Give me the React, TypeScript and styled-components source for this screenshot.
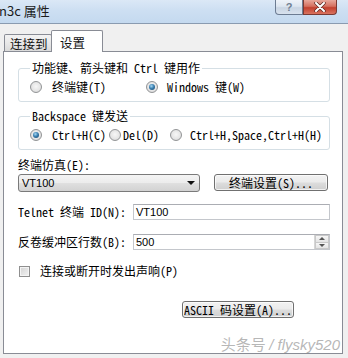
import React from "react";
import styled, { createGlobalStyle } from "styled-components";

const SONG = `"Noto Sans Mono CJK SC", "Noto Sans CJK SC", monospace`;
const UI = `"Noto Sans CJK SC", "Noto Sans", sans-serif`;
const SANS = `"Liberation Sans", Arial, sans-serif`;

const Global = createGlobalStyle`
  html, body { margin: 0; padding: 0; }
  body { width: 348px; height: 358px; overflow: hidden; background: #f0f0f0; }
  * { box-sizing: border-box; }
`;

const Window = styled.div`
  position: relative;
  width: 348px;
  height: 358px;
  display: flex;
  flex-direction: column;
  background: #f0f0f0;
  font-family: ${SONG};
  font-size: 12px;
  color: #000;
`;

const TitleBar = styled.div`
  flex: none;
  height: 24px;
  display: flex;
  align-items: flex-start;
  justify-content: space-between;
  padding-right: 11px;
  background: linear-gradient(180deg, #dbe8f6 0%, #cddff2 45%, #c4d9ef 100%);
  border-bottom: 1px solid #8a9bb0;
`;

const Title = styled.div`
  font-family: ${UI};
  font-size: 13px;
  line-height: 22px;
  margin-left: -1px;
  color: #1b1b1b;
`;

const Caption = styled.div`
  display: flex;
`;

const CapButton = styled.div<{ $close?: boolean }>`
  width: ${(p) => (p.$close ? 34 : 28)}px;
  height: 15px;
  display: flex;
  align-items: center;
  justify-content: center;
  border: 1px solid ${(p) => (p.$close ? "#7a3a33" : "#6c7c92")};
  border-top: none;
  border-radius: ${(p) => (p.$close ? "0 0 4px 0" : "0 0 0 4px")};
  background: ${(p) =>
    p.$close
      ? "linear-gradient(180deg, #e8a89b 0%, #d5705f 45%, #c2402e 55%, #d9735f 100%)"
      : "linear-gradient(180deg, #eef3f9 0%, #dde6f0 45%, #c9d5e3 55%, #d8e2ee 100%)"};
  font-family: ${SANS};
  font-weight: bold;
  font-size: 11px;
  color: #6f7f92;
`;

const Body = styled.div`
  flex: 1;
  display: flex;
  flex-direction: column;
  padding: 6px 5px 4px 3px;
`;

const TabRow = styled.div`
  position: relative;
  z-index: 1;
  height: 22px;
  margin-bottom: -1px;
  padding-left: 1px;
  display: flex;
  align-items: flex-end;
`;

const Tab = styled.div<{ $active?: boolean; $w: number }>`
  width: ${(p) => p.$w}px;
  height: ${(p) => (p.$active ? 22 : 17)}px;
  margin-bottom: ${(p) => (p.$active ? 0 : 1)}px;
  margin-left: ${(p) => (p.$active ? -1 : 0)}px;
  padding-left: ${(p) => (p.$active ? 8 : 5)}px;
  padding-top: ${(p) => (p.$active ? 4 : 1)}px;
  border: 1px solid #898c95;
  border-bottom: none;
  border-radius: 2px 2px 0 0;
  background: ${(p) =>
    p.$active ? "#ffffff" : "linear-gradient(180deg, #f3f3f3 0%, #e8e8e8 50%, #dadada 100%)"};
  font-family: ${UI};
  font-size: 12.5px;
  line-height: 15px;
  color: #111;
`;

const Panel = styled.div`
  flex: 1;
  display: flex;
  flex-direction: column;
  padding: 9px 12px 0 14px;
  background: #fff;
  border: 1px solid #898c95;
`;

const Group = styled.fieldset<{ $mt?: number }>`
  margin: ${(p) => p.$mt ?? 0}px 0 0 0;
  padding: 4px 0 6px 11px;
  border: 1px solid #d5dfe5;
  border-radius: 3px;
  min-width: 0;
`;

const Legend = styled.legend`
  padding: 0 2px;
  line-height: 14px;
  font-size: 12px;
`;

const RadioRow = styled.div`
  height: 16px;
  display: flex;
  align-items: center;
`;

const Option = styled.label<{ $w?: number; $gap: number }>`
  display: flex;
  align-items: center;
  gap: ${(p) => p.$gap}px;
  width: ${(p) => (p.$w ? `${p.$w}px` : "auto")};
  flex: none;
  white-space: nowrap;
  line-height: 14px;
`;

const Dot = styled.span<{ $on?: boolean }>`
  width: 12px;
  height: 12px;
  flex: none;
  border-radius: 50%;
  border: 1px solid #929496;
  background: radial-gradient(circle at 50% 45%, #f7f7f7 0%, #e6e6e6 55%, #cfcfcf 100%);
  display: flex;
  align-items: center;
  justify-content: center;
  &::after {
    content: "";
    display: ${(p) => (p.$on ? "block" : "none")};
    width: 6px;
    height: 6px;
    border-radius: 50%;
    background: radial-gradient(circle at 40% 35%, #a6d8f3 0%, #3a7fb0 45%, #163f62 100%);
  }
`;

const FieldLabel = styled.div<{ $mt: number }>`
  margin-top: ${(p) => p.$mt}px;
  line-height: 14px;
  height: 14px;
`;

const Row = styled.div<{ $mt: number; $h: number }>`
  margin-top: ${(p) => p.$mt}px;
  height: ${(p) => p.$h}px;
  display: flex;
  align-items: center;
`;

const Combo = styled.div`
  width: 182px;
  height: 18px;
  display: flex;
  align-items: center;
  justify-content: space-between;
  padding: 0 4px 0 3px;
  border: 1px solid #7a7a7a;
  border-radius: 3px;
  background: linear-gradient(180deg, #f4f4f4 0%, #ececec 48%, #dfdfdf 52%, #d2d2d2 100%);
  font-family: ${SANS};
  font-size: 11px;
`;

const Arrow = styled.span`
  width: 0;
  height: 0;
  border-left: 4px solid transparent;
  border-right: 4px solid transparent;
  border-top: 4px solid #111;
  margin-top: 1px;
`;

const Button = styled.div<{ $w: number; $ml: number }>`
  width: ${(p) => p.$w}px;
  height: 17px;
  margin-left: ${(p) => p.$ml}px;
  display: flex;
  align-items: center;
  justify-content: center;
  border: 1px solid #707070;
  border-radius: 3px;
  background: linear-gradient(180deg, #f2f2f2 0%, #ebebeb 48%, #dddddd 52%, #cfcfcf 100%);
  box-shadow: inset 0 0 0 1px rgba(255, 255, 255, 0.7);
  white-space: nowrap;
  line-height: 14px;
`;

const InlineLabel = styled.div`
  width: 115px;
  flex: none;
  line-height: 14px;
  white-space: nowrap;
`;

const Input = styled.div`
  flex: 1;
  height: 16px;
  display: flex;
  align-items: center;
  justify-content: space-between;
  padding: 0 0 0 2px;
  border: 1px solid #c4c7cc;
  border-top-color: #abadb3;
  background: #fff;
  font-family: ${SANS};
  font-size: 11px;
`;

const Spinner = styled.div`
  width: 15px;
  height: 14px;
  display: flex;
  flex-direction: column;
  border-left: 1px solid #d6d6d6;
`;

const SpinHalf = styled.div<{ $up?: boolean }>`
  flex: 1;
  display: flex;
  align-items: center;
  justify-content: center;
  background: linear-gradient(180deg, #f6f6f6, #e4e4e4);
  border: 1px solid #c9c9c9;
  border-top-width: ${(p) => (p.$up ? 1 : 0)}px;
  &::after {
    content: "";
    width: 0;
    height: 0;
    border-left: 3px solid transparent;
    border-right: 3px solid transparent;
    ${(p) => (p.$up ? "border-bottom: 3px solid #555;" : "border-top: 3px solid #555;")}
  }
`;

const Check = styled.span`
  width: 11px;
  height: 11px;
  flex: none;
  margin-left: 1px;
  border: 1px solid #8f8f8f;
  background: linear-gradient(135deg, #d2d2d2 0%, #e6e6e6 60%, #f2f2f2 100%);
  box-shadow: inset 0 0 0 1px #f4f4f4;
`;

const CheckLabel = styled.span`
  margin-left: 10px;
  line-height: 14px;
`;

const Watermark = styled.div`
  position: absolute;
  right: 8px;
  bottom: 5px;
  font-family: ${UI};
  font-size: 15px;
  line-height: 17px;
  color: rgba(170, 170, 170, 0.85);
  white-space: nowrap;
`;

const Slant = styled.span`
  font-style: italic;
  font-family: ${SANS};
`;

export default function App() {
  return (
    <Window>
      <Global />
      <TitleBar>
        <Title>n3c 属性</Title>
        <Caption>
          <CapButton>?</CapButton>
          <CapButton $close>
            <svg width="12" height="10" viewBox="0 0 12 10">
              <path d="M2 1 L10 9 M10 1 L2 9" stroke="#5a2a24" strokeWidth="3.4" strokeLinecap="round" />
              <path d="M2 1 L10 9 M10 1 L2 9" stroke="#fff" strokeWidth="2" strokeLinecap="round" />
            </svg>
          </CapButton>
        </Caption>
      </TitleBar>
      <Body>
        <TabRow>
          <Tab $w={48}>连接到</Tab>
          <Tab $w={52} $active>
            设置
          </Tab>
        </TabRow>
        <Panel>
          <Group>
            <Legend>功能键、箭头键和 Ctrl 键用作</Legend>
            <RadioRow>
              <Option $w={116} $gap={10}>
                <Dot />
                终端键(T)
              </Option>
              <Option $gap={9}>
                <Dot $on />
                Windows 键(W)
              </Option>
            </RadioRow>
          </Group>
          <Group $mt={7}>
            <Legend>Backspace 键发送</Legend>
            <RadioRow>
              <Option $w={79} $gap={10}>
                <Dot $on />
                Ctrl+H(C)
              </Option>
              <Option $w={61} $gap={2}>
                <Dot />
                Del(D)
              </Option>
              <Option $gap={8}>
                <Dot />
                Ctrl+H,Space,Ctrl+H(H)
              </Option>
            </RadioRow>
          </Group>
          <FieldLabel $mt={8}>终端仿真(E):</FieldLabel>
          <Row $mt={1} $h={19}>
            <Combo>
              VT100
              <Arrow />
            </Combo>
            <Button $w={114} $ml={14}>
              终端设置(S)...
            </Button>
          </Row>
          <Row $mt={12} $h={16}>
            <InlineLabel>Telnet 终端 ID(N):</InlineLabel>
            <Input>VT100</Input>
          </Row>
          <Row $mt={14} $h={16}>
            <InlineLabel>反卷缓冲区行数(B):</InlineLabel>
            <Input>
              500
              <Spinner>
                <SpinHalf $up />
                <SpinHalf />
              </Spinner>
            </Input>
          </Row>
          <Row $mt={14} $h={14}>
            <Check />
            <CheckLabel>连接或断开时发出声响(P)</CheckLabel>
          </Row>
          <Row $mt={23} $h={17}>
            <Button $w={112} $ml={164}>
              ASCII 码设置(A)...
            </Button>
          </Row>
        </Panel>
      </Body>
      <Watermark>
        头条号 <Slant>/ flysky520</Slant>
      </Watermark>
    </Window>
  );
}
